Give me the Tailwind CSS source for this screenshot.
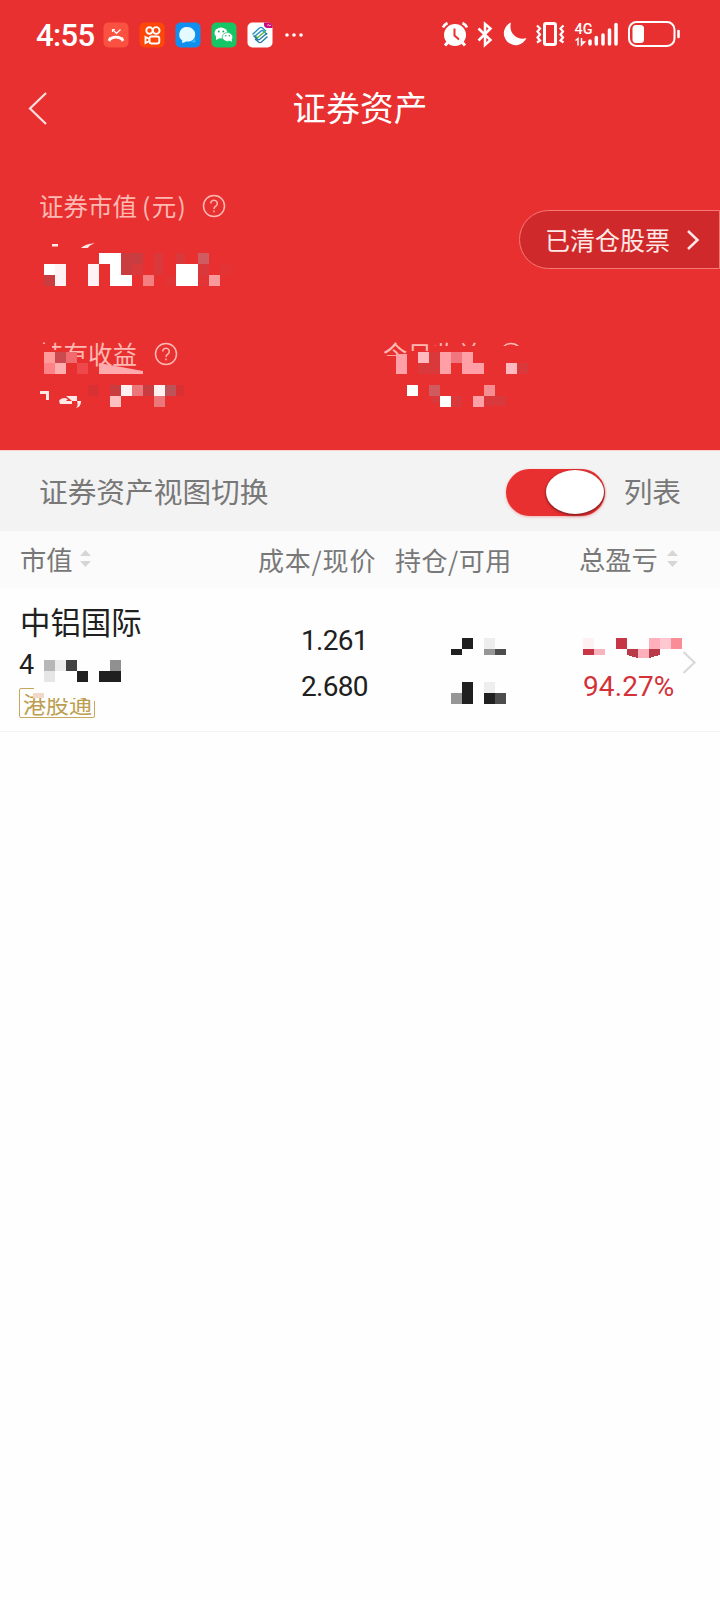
<!DOCTYPE html>
<html lang="zh-CN">
<head>
<meta charset="utf-8">
<meta name="viewport" content="width=device-width">
<title>证券资产</title>
<script src="https://cdn.jsdelivr.net/npm/@tailwindcss/browser@4"></script>
</head>
<body class="bg-white">
<main class="w-[720px] h-[1600px] overflow-hidden bg-[#fefefe] font-['Noto_Sans_CJK_SC',sans-serif] whitespace-nowrap">
  <header class="relative h-[450px] bg-[#e93031] text-white">
    <!-- status bar -->
    <div class="h-[70px] flex items-start justify-between pl-9 pr-[39px] pt-[20px]">
      <div class="flex items-center">
        <span class="w-[67px] h-[30px] leading-[32px] text-[31px] font-medium font-['Roboto',sans-serif] tracking-[-0.6px]">4:55</span>
        <svg class="w-[203px] h-[30px]" viewBox="103 20 203 30">
          <rect x="103.500" y="22.500" width="25" height="25" rx="5" fill="#fb5140"/>
          <path d="M109 40.500c3-4.500 11-4.500 14 0M109 41l1.500-3M123 41l-1.500-3" fill="none" stroke="#fff" stroke-width="2.800"/>
          <path d="M112.500 29.500l4 4 4-4M112.500 32v-2.500h2.500" fill="none" stroke="#fff" stroke-width="1.200"/>
          <rect x="139.500" y="22.500" width="25" height="25" rx="5" fill="#fc4708"/>
          <g fill="none" stroke="#fff" stroke-width="1.900"><circle cx="149.500" cy="30.500" r="3.200"/><circle cx="156.200" cy="30.500" r="3.400"/><rect x="149.500" y="36.500" width="9.800" height="7" rx="2"/><path d="M149.500 39l-4-2v6l4-2"/></g>
          <rect x="175.500" y="22.500" width="25" height="25" rx="5" fill="#118fee"/>
          <path d="M187.500 27a7.700 7.500 0 0 1 7.700 7.500c0 4.500-3.500 7-7 7-1.500 0-2.500 0-3.500.8l-2.700.7.300-2.500a7.500 7.500 0 0 1 5.200-13.500z" fill="#e5faff"/>
          <path d="M190 42c2.500-.5 4-1.500 5-3.500l.5 4z" fill="#40b8ff"/>
          <rect x="211.500" y="22.500" width="25" height="25" rx="5" fill="#16c565"/>
          <ellipse cx="221" cy="33" rx="6.500" ry="5.400" fill="#fff"/><path d="M216 36l0 4 4-2z" fill="#fff"/>
          <ellipse cx="227.500" cy="37" rx="5.300" ry="4.400" fill="#fff" stroke="#16c565" stroke-width=".7"/><path d="M229 40l3 2-.3-3z" fill="#fff"/>
          <g fill="#16a55a"><circle cx="218.800" cy="31.500" r=".9"/><circle cx="223.300" cy="31.500" r=".9"/><circle cx="225.800" cy="35.800" r=".7"/><circle cx="229.300" cy="35.800" r=".7"/></g>
          <rect x="247.500" y="22.500" width="25" height="25" rx="5" fill="#fff"/>
          <g fill="none" stroke-width="1.400"><path d="M252.500 34.500l7-6.500c1-.8 2-.8 3 0l3.500 3.200M254 37l7-6c.8-.6 1.500-.6 2.300 0l3.700 3.500" stroke="#238fc5"/><path d="M255.500 39.500l10-8.500M257 36.500l-1.500 2" stroke="#57b947"/><path d="M253.500 35.500l4 3.800c.8.600 1.500.6 2.300 0l7.200-6M255 39l3.500 3c1 .8 2 .8 3 0l6-5.500" stroke="#2579a5"/></g>
          <path d="M264 22.500h4a4.500 4.500 0 0 1 4.500 4.500v1h-5a3.500 3.500 0 0 1-3.500-3.500z" fill="#c5087b"/><path d="M267 25.500l1.500-1 1 1.500 1.500-1" stroke="#fff" stroke-width=".7" fill="none"/>
          <g fill="#fff"><circle cx="287" cy="35" r="1.800"/><circle cx="294" cy="35" r="1.800"/><circle cx="301" cy="35" r="1.800"/></g>
        </svg>
      </div>
      <svg class="w-[240px] h-[30px]" viewBox="441 20 240 30" fill="none" stroke="#fff">
        <circle cx="455" cy="35" r="11" fill="#fff" stroke="none"/>
        <path d="M443 27.500c.8-2 2.500-3.500 4.500-4.500M467 27.500c-.8-2-2.500-3.500-4.500-4.500" stroke-width="2.600"/>
        <path d="M448 42l-3 3.500M462 42l3 3.500" stroke-width="3"/>
        <path d="M454.500 28.500v7l4.500 4" stroke="#e93031" stroke-width="2"/>
        <path d="M478.500 28.500l12 11.500-5.500 5V24l5.500 4.500-12 12" stroke-width="2.500"/>
        <path d="M511 22.500a11.800 11.800 0 1 0 15.500 15.500c-9 3-18.500-5-15.500-15.500z" fill="#fff" stroke="none"/>
        <rect x="544.500" y="23.500" width="11" height="21" rx="1.500" stroke-width="3"/>
        <path d="M537 25.500l3 3-2.500 3 2.500 3-2.500 3 2.500 3-3 2M563.500 25.500l-3 3 2.500 3-2.500 3 2.500 3-2.500 3 3 2" stroke-width="2.200"/>
        <text x="574.500" y="34" font-family="Roboto" font-size="15" font-weight="500" fill="#fff" stroke="none" textLength="18" lengthAdjust="spacingAndGlyphs">4G</text>
        <path d="M575.500 40.500l2.500-2v7M581.500 38v7l3-3h-3" stroke-width="1.500"/>
        <path d="M590 41v3M596.300 37.500v6.500M603 35v9M609.500 30v14M616 24.500v19.500" stroke-width="3.500" stroke-linecap="round"/>
        <rect x="629" y="22" width="45.500" height="24" rx="7.500" stroke-width="2"/>
        <rect x="632.500" y="25" width="11.500" height="18" rx="3.500" fill="#fff" stroke="none"/>
        <path d="M678.500 31v6" stroke-width="2.600" stroke-linecap="round"/>
      </svg>
    </div>
    <!-- title bar -->
    <div class="h-[76px] grid grid-cols-[1fr_auto_1fr] items-center pl-[28px] pr-[28px]">
      <svg class="w-[20px] h-[36px]" viewBox="0 0 20 36" fill="none" stroke="#fff" stroke-opacity=".85" stroke-width="2.200"><path d="M18 3L2 18.500 18 34"/></svg>
      <h1 class="pb-[2px] text-[33.700px] leading-[74px] font-normal">证券资产</h1>
      <span></span>
    </div>
    <!-- market value -->
    <div class="flex justify-between pl-[39px]">
      <div class="pt-[43px]">
        <div class="flex items-center h-[34px] text-[24.500px] leading-[34px] text-[#ffb9b3]">
          <span>证券市值</span><span class="ml-[5px] tracking-[1.400px]">(元)</span>
          <svg class="ml-[15px] size-[24px]" viewBox="0 0 24 24" fill="none" stroke="currentColor" stroke-width="1.500"><circle cx="12" cy="12" r="10.500"/><path d="M8.700 9.500a3.300 3.300 0 1 1 5.200 2.700c-1.300.9-1.900 1.300-1.900 2.800M12 16.500v1.800"/></svg>
        </div>
      </div>
      <button class="mt-[64px] w-[201px] h-[59px] rounded-l-full border border-[#f87876] bg-[#d0292b] flex items-center pl-[25px] text-[25px] text-[#ffe9e7]">
        <span>已清仓股票</span>
        <svg class="ml-[16px] w-[14px] h-[22px]" viewBox="0 0 14 22" fill="none" stroke="#ffe9e7" stroke-width="2.500"><path d="M2 2l9.500 9L2 20"/></svg>
      </button>
    </div>
    <!-- earnings -->
    <div class="mt-[68px] grid grid-cols-[344px_1fr] pl-[39px] text-[24.500px] leading-[34px] text-[#ffb9b3]">
      <div class="flex items-center h-[34px]"><span>持有收益</span>
        <svg class="ml-[17px] size-[24px]" viewBox="0 0 24 24" fill="none" stroke="currentColor" stroke-width="1.500"><circle cx="12" cy="12" r="10.500"/><path d="M8.700 9.500a3.300 3.300 0 1 1 5.200 2.700c-1.300.9-1.900 1.300-1.900 2.800M12 16.500v1.800"/></svg>
      </div>
      <div class="flex items-center h-[34px]"><span>今日收益</span>
        <svg class="ml-[18px] size-[24px]" viewBox="0 0 24 24" fill="none" stroke="currentColor" stroke-width="1.500"><circle cx="12" cy="12" r="10.500"/></svg>
      </div>
    </div>
    <!-- privacy mosaic over the amounts -->
    <svg class="absolute inset-0 w-[720px] h-[450px]" viewBox="0 0 720 450" shape-rendering="crispEdges">
      <g shape-rendering="auto" fill="#ffe9e7"><path d="M52 244h6v2.500h-6zM81 248c3-2.500 7-4.500 14-4.500-4 1-6 2-7 4.500z"/></g>
      <path fill="#fff" d="M99 253h22v22h11v11h-22v-22h-11zM176 264h22v22h-22z"/>
      <path fill="#fff" d="M44 264h22v22H55v-11H44z"/>
      <path fill="#fff1f4" d="M55 264h11v22H55zM88 264h11v22H88z"/>
      <path fill="#c93c40" d="M44 275h11v11H44zM121 253h11v22h-11zM132 253h11v11h-11z"/>
      <path fill="#da393b" d="M132 264h11v11h-11zM154 253h9v22h-9zM176 253h9v11h-9zM198 264h11v11h-11z"/>
      <path fill="#e23335" d="M165 275h11v11h-11zM198 275h11v11h-11zM220 264h11v11h-11z"/>
      <path fill="#cf5c60" d="M198 253h11v11h-11z"/>
      <path fill="#f47e80" d="M143 275h11v11h-11z"/>
      <path fill="#f9999c" d="M209 275h11v11h-11z"/>
    </svg>
    <svg class="absolute inset-0 w-[720px] h-[450px]" viewBox="0 0 720 450" shape-rendering="crispEdges">
      <path fill="#e93031" d="M39 344h13v26H39zM52 350h12v20H52zM64 359h24v11H64zM383 356h30v16h-30zM409 351h22v20h-22zM431 346h99v26h-99z"/>
      <path fill="#ff9b9a" d="M44 352h11v11H44z"/><path fill="#ca4a50" d="M55 352h11v11H55z"/><path fill="#f16b6e" d="M66 352h11v11H66z"/>
      <path fill="#ff8386" d="M44 363h11v11H44z"/><path fill="#ffaeb0" d="M55 363h11v11H55z"/><path fill="#ef484b" d="M77 363h11v11H77z"/>
      <path fill="#ffaaad" shape-rendering="auto" d="M99 363l44 8v3H99z"/>
      <g fill="#ffe9e7" shape-rendering="auto"><path d="M40 391h9v9h-3v-6H40zM59 401c1-2 3-3 6-3l3 1-2 2h6v3H60zM66 396h11v5h-5zM77 401h4c0 3-1 6-5 7 2-2 2-4 1-7z"/></g>
      <path fill="#d93033" d="M88 385h11v11H88zM176 385h8v11h-8z"/><path fill="#c93c40" d="M110 385h11v11h-11zM143 385h11v11h-11z"/>
      <path fill="#fff1f1" d="M121 385h11v11h-11zM154 385h11v11h-11z"/><path fill="#eb777b" d="M132 385h11v11h-11zM154 396h11v11h-11z"/><path fill="#ffc0c1" d="M110 396h11v11h-11z"/><path fill="#bd5259" d="M165 385h11v11h-11z"/>
      <path fill="#da393b" d="M418 363h22v11h-22zM429 352h11v11h-11zM517 363h11v11h-11zM431 396h9v7h-9zM451 396h11v11h-11zM484 396h22v10h-22z"/>
      <path fill="#ffa0a6" d="M396 354h11v20h-11zM440 352h11v22h-11zM462 352h11v11h11v11h-22z"/><path fill="#ffb9bf" d="M418 352h11v11h-11zM506 363h11v11h-11z"/><path fill="#f1767d" d="M451 352h11v11h-11z"/>
      <path fill="#fff" d="M407 385h11v11h-11zM440 396h11v11h-11z"/><path fill="#d05b5f" d="M429 385h11v11h-11z"/><path fill="#f48e91" d="M484 385h11v11h-11z"/><path fill="#ffa0a6" d="M473 396h11v11h-11z"/>
    </svg>
  </header>

  <section class="h-[81px] bg-[#f3f3f3] border-t border-[#fbd0d0] flex items-center pl-[39px] pr-[39px] text-[28.700px] text-[#787878]">
    <span class="flex-1 pb-px">证券资产视图切换</span>
    <div class="w-[99px] h-[47px] mt-[2px] mr-[19px] rounded-full bg-[#e93031] flex justify-end items-center pr-px shadow-[0_1px_3px_#e9303155]">
      <div class="w-[58px] h-[44px] rounded-[50%] bg-white shadow-[0_1px_3px_#611218]"></div>
    </div>
    <span class="pb-px">列表</span>
  </section>

  <div class="h-[57px] bg-[#fbfbfb] grid grid-cols-[238px_137px_184px_1fr] items-center pl-[20px] text-[26px] text-[#787878]">
    <div class="flex items-center pb-[2px]"><span class="text-[26.300px]">市值</span><svg class="ml-[7px] w-[11px] h-[18px]" viewBox="0 0 11 18" fill="#d6d6d6"><path d="M0 6l5.500-6L11 6zM0 11h11l-5.500 6z"/></svg></div>
    <span class="tracking-[0.800px]">成本/现价</span>
    <span class="tracking-[0.500px]">持仓/可用</span>
    <div class="flex items-center pb-[2px]"><span class="text-[26.300px]">总盈亏</span><svg class="ml-[9px] w-[11px] h-[18px]" viewBox="0 0 11 18" fill="#d6d6d6"><path d="M0 6l5.500-6L11 6zM0 11h11l-5.500 6z"/></svg></div>
  </div>

  <article class="relative h-[144px] border-b border-[#f3f3f3] grid grid-cols-[282px_168px_114px_1fr] pl-[19px] text-[#202020]">
    <div class="pt-[12px]">
      <h2 class="text-[30.400px] leading-[42px] pl-px font-normal">中铝国际</h2>
      <p class="h-[35px] leading-[46px] text-[27px] font-['Roboto',sans-serif] tracking-[-1px]">4</p>
      <div class="mt-[11px] w-[76px] h-[30px] border border-[#c5a75e] rounded-[2px] flex items-center pl-[3px] text-[23px] leading-[28px] text-[#bd9e51]">港股通</div>
    </div>
    <div class="pt-[30px] font-['Roboto',sans-serif] text-[28px] leading-[46px] tracking-[-0.700px]"><p>1.261</p><p>2.680</p></div>
    <div></div>
    <div class="pt-[76px] font-['Roboto',sans-serif] text-[28px] leading-[46px] tracking-[0.100px] text-[#d3323a]">94.27%</div>
    <!-- privacy mosaic and row arrow -->
    <svg class="absolute inset-0 w-[720px] h-[143px]" viewBox="0 588 720 143" shape-rendering="crispEdges">
      <path fill="#b7b7b7" d="M44 660h11v11H44z"/><path fill="#ececec" d="M55 660h11v11H55z"/><path fill="#414141" d="M66 660h11v11H66z"/><path fill="#e6e6e6" d="M44 671h11v11H44z"/><path fill="#202020" d="M77 671h11v11H77zM99 671h22v11H99z"/><path fill="#909090" d="M110 660h11v11h-11z"/>
      <path fill="#fefefe" d="M34 687h62v14H92v-3H44v-6H34z"/>
      <path fill="#f0d8ca" d="M33 693h11v5H33z"/>
      <path fill="#202020" d="M462 638h11v11h-11zM451 649h11v6h-11zM462 682h11v22h-11zM484 693h11v11h-11z"/>
      <path fill="#eee" d="M484 638h11v11h-11zM484 682h11v11h-11z"/><path fill="#969696" d="M484 649h11v6h-11zM451 693h11v11h-11z"/><path fill="#4d4d4d" d="M495 649h11v6h-11zM495 693h11v11h-11z"/>
      <path fill="#fff0f3" d="M583 638h11v11h-11z"/><path fill="#c73644" d="M583 649h11v6h-11zM616 638h11v11h-11z"/><path fill="#f8b3bf" d="M594 649h11v6h-11z"/>
      <path fill="#b93b4a" d="M627 649h11v9l-11-3zM649 649h11v6l-11 3z"/><path fill="#ffb0bb" d="M638 649h11v9h-11zM649 638h11v11h-11z"/><path fill="#ffc8d0" d="M660 638h11v11h-11z"/><path fill="#fa8c98" d="M671 638h11v11h-11z"/>
      <path d="M683.500 652l11 10.500-11 10.500" fill="none" stroke="#d9d9d9" stroke-width="2.200" shape-rendering="auto"/>
    </svg>
  </article>
</main>
</body>
</html>
